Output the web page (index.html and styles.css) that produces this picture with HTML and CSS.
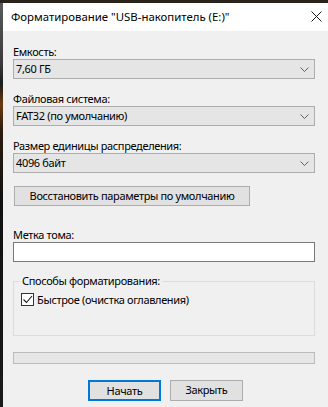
FILE: index.html
```html
<!DOCTYPE html>
<html lang="ru">
<head>
	<meta charset="utf-8" />
	<title>Форматирование</title>
	<link rel="stylesheet" href="styles.css">
</head>
<body>
	<div class="screen">
		<div class="backdrop-top"></div>
		<div class="row">
			<div class="backdrop-left"></div>
			<div class="dialog">
				<header class="titlebar">
					<span class="title">Форматирование "USB-накопитель (E:)"</span>
					<svg class="close" width="11" height="11" viewBox="0 0 11 11">
						<path d="M0.5 0.5 L10.5 10.5 M10.5 0.5 L0.5 10.5" stroke="#1a1a1a" stroke-width="1" fill="none" />
					</svg>
				</header>
				<main class="body">
					<div class="label first">Емкость:</div>
					<div class="combo">
						<span>7,60 ГБ</span>
						<svg class="chev" width="9" height="5" viewBox="0 0 9 5"><path d="M0.5 0.5 L4.5 4.5 L8.5 0.5" stroke="#606060" fill="none" /></svg>
					</div>

					<div class="label">Файловая система:</div>
					<div class="combo">
						<span>FAT32 (по умолчанию)</span>
						<svg class="chev" width="9" height="5" viewBox="0 0 9 5"><path d="M0.5 0.5 L4.5 4.5 L8.5 0.5" stroke="#606060" fill="none" /></svg>
					</div>

					<div class="label">Размер единицы распределения:</div>
					<div class="combo">
						<span>4096 байт</span>
						<svg class="chev" width="9" height="5" viewBox="0 0 9 5"><path d="M0.5 0.5 L4.5 4.5 L8.5 0.5" stroke="#606060" fill="none" /></svg>
					</div>

					<div class="btn restore">Восстановить параметры по умолчанию</div>

					<div class="label volume">Метка тома:</div>
					<div class="textbox"></div>

					<fieldset class="group">
						<legend>Способы форматирования:</legend>
						<div class="check">
							<span class="box">
								<svg width="11" height="11" viewBox="0 0 11 11"><path d="M1.5 5.5 L4.5 8.5 L10 2" stroke="#1a1a1a" stroke-width="1.1" fill="none" /></svg>
							</span>
							<span>Быстрое (очистка оглавления)</span>
						</div>
					</fieldset>

					<div class="progress"></div>

					<div class="actions">
						<div class="btn default">Начать</div>
						<div class="btn">Закрыть</div>
					</div>
				</main>
			</div>
		</div>
	</div>
</body>
</html>
```

FILE: styles.css
```css
body {
	margin: 0;
	width: 328px;
	height: 407px;
	overflow: hidden;
	font-family: "Noto Sans", "Open Sans", sans-serif;
	font-size: 11px;
	letter-spacing: -0.35px;
	color: #000000;
	background-color: #f0f0f0;
}

.screen {
	display: flex;
	flex-direction: column;
	height: 407px;
}

.backdrop-top {
	height: 3px;
	background-color: #2a231c;
	flex: none;
}

.row {
	display: flex;
	flex: 1;
}

.backdrop-left {
	width: 3px;
	flex: none;
	background: linear-gradient(to bottom, #5a5a5a 0%, #3a3a3a 15%, #1b1b1b 20%, #6b3b12 25%, #2a1c10 32%, #101010 50%, #1a1a1a 100%);
}

.dialog {
	flex: 1;
	display: flex;
	flex-direction: column;
	background-color: #f0f0f0;
}

/* Title bar
 * ========= */

.titlebar {
	height: 28px;
	background-color: #ffffff;
	display: flex;
	align-items: center;
	padding-left: 8px;
	padding-right: 6px;
	flex: none;
}

.title {
	flex: 1;
	white-space: nowrap;
	font-size: 11.4px;
	letter-spacing: 0;
	margin-top: -1px;
}

.close {
	margin-top: -2px;
}

/* Form body
 * ========= */

.body {
	padding: 0 13px 0 10px;
	display: flex;
	flex-direction: column;
}

.label {
	line-height: 15px;
	height: 15px;
	margin-top: 12px;
	white-space: nowrap;
}

.label.first {
	margin-top: 13px;
}

.label.volume {
	margin-top: 21px;
}

.combo {
	height: 20px;
	box-sizing: border-box;
	border: 1px solid #adadad;
	background-color: #e5e5e5;
	display: flex;
	align-items: center;
	padding: 0 5px 0 2px;
}

.combo span {
	flex: 1;
	line-height: 16px;
}

.btn {
	box-sizing: border-box;
	border: 1px solid #adadad;
	background-color: #e1e1e1;
	height: 21px;
	line-height: 18px;
	text-align: center;
	white-space: nowrap;
}

.restore {
	margin-top: 13px;
	margin-left: 1px;
	width: 236px;
	height: 20px;
}

.textbox {
	height: 20px;
	box-sizing: border-box;
	border: 1px solid #7a7a7a;
	background-color: #ffffff;
}

.group {
	margin: 12px 0 0 0;
	padding: 0 0 0 7px;
	height: 62px;
	box-sizing: border-box;
	border: 1px solid #dcdcdc;
	min-width: 0;
}

.group legend {
	padding: 0 2px;
	margin-left: -1px;
	line-height: 14px;
}

.check {
	display: flex;
	align-items: center;
	gap: 3px;
	margin-top: 4px;
}

.check .box {
	width: 13px;
	height: 13px;
	box-sizing: border-box;
	border: 1px solid #333333;
	background-color: #ffffff;
	display: flex;
	align-items: center;
	justify-content: center;
}

.progress {
	margin-top: 16px;
	height: 12px;
	box-sizing: border-box;
	border: 1px solid #bcbcbc;
	background-color: #e6e6e6;
}

.actions {
	display: flex;
	justify-content: center;
	gap: 9px;
	margin-top: 16px;
	padding-left: 3px;
}

.actions .btn {
	width: 73px;
}

.actions .btn.default {
	border: 2px solid #0078d7;
	line-height: 17px;
}
```
